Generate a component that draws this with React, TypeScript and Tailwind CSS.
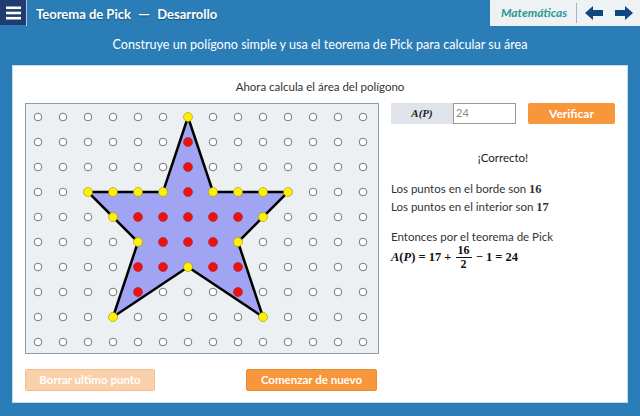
import React from "react";

const verts: [number, number][] = [
  [6, 0], [7, 3], [10, 3], [8, 5], [9, 8], [6, 6], [3, 8], [4, 5], [2, 3], [5, 3],
];
const border = new Set([
  "6,0","7,3","8,3","9,3","10,3","9,4","8,5","9,8","6,6","3,8","4,5","3,4","2,3","3,3","4,3","5,3",
]);
const interior = new Set([
  "6,1","6,2","6,3",
  "4,4","5,4","6,4","7,4","8,4",
  "5,5","6,5","7,5",
  "4,6","5,6","7,6","8,6",
  "4,7","8,7",
]);

const px = (i: number) => 12 + 25 * i;
const py = (j: number) => 13 + 25 * j;

function Grid() {
  const dots: React.ReactNode[] = [];
  for (let j = 0; j < 10; j++) {
    for (let i = 0; i < 14; i++) {
      const k = `${i},${j}`;
      if (border.has(k) || interior.has(k)) continue;
      dots.push(
        <circle key={k} cx={px(i)} cy={py(j)} r={3.8} fill="#ffffff" stroke="#777777" strokeWidth={1} />
      );
    }
  }
  const pts = verts.map(([i, j]) => `${px(i)},${py(j)}`).join(" ");
  return (
    <svg width={352} height={249} viewBox="0 0 352 249">
      {dots}
      <polygon points={pts} fill="#a1a4f3" stroke="#000000" strokeWidth={2.5} strokeLinejoin="miter" />
      {[...interior].map((k) => {
        const [i, j] = k.split(",").map(Number);
        return <circle key={"r" + k} cx={px(i)} cy={py(j)} r={4.5} fill="#ee1111" stroke="#aa2222" strokeWidth={0.6} />;
      })}
      {[...border].map((k) => {
        const [i, j] = k.split(",").map(Number);
        return <circle key={"y" + k} cx={px(i)} cy={py(j)} r={4.5} fill="#ffef00" stroke="#999900" strokeWidth={0.6} />;
      })}
    </svg>
  );
}

export default function App() {
  return (
    <div className="w-[640px] h-[416px] bg-[#2a7db7] flex flex-col font-['Lato',sans-serif] overflow-hidden">
      <div className="h-[26px] flex items-start">
        <div className="w-[26px] h-[25px] bg-[#1f3b70] flex items-center justify-center">
          <svg width="15" height="14" viewBox="0 0 15 14">
            <rect x="0" y="0.5" width="15" height="2.6" fill="#ffffff" />
            <rect x="0" y="5.7" width="15" height="2.6" fill="#ffffff" />
            <rect x="0" y="10.9" width="15" height="2.6" fill="#ffffff" />
          </svg>
        </div>
        <div className="w-px h-[26px] bg-[#a8c8e0]" />
        <div className="ml-[9px] text-[13px] font-bold text-white leading-[26px] [text-shadow:0_1px_1px_rgba(0,0,0,0.35)]">
          Teorema de Pick <span className="mx-[4px] text-[15px]">—</span> Desarrollo
        </div>
        <div className="flex-1" />
        <div className="w-[150px] h-[26px] bg-[#eef2f5] flex items-center">
          <span className="ml-[11px] text-[12px] italic font-bold text-[#2b9a8f]">Matemáticas</span>
          <div className="ml-[9px] w-px h-[20px] bg-[#9fb5c5]" />
          <svg className="ml-[8px]" width="18" height="14" viewBox="0 0 18 14">
            <polygon points="0,7 8,0 8,4 18,4 18,10 8,10 8,14" fill="#0f4880" />
          </svg>
          <svg className="ml-[12px]" width="18" height="14" viewBox="0 0 18 14">
            <polygon points="18,7 10,0 10,4 0,4 0,10 10,10 10,14" fill="#0f4880" />
          </svg>
        </div>
      </div>
      <div className="h-[39px] flex items-center justify-center text-white text-[12.6px]">
        Construye un polígono simple y usa el teorema de Pick para calcular su área
      </div>
      <div className="mx-[12px] h-[338px] bg-white border border-[#c9dbe8] flex flex-col px-[12px]">
        <div className="pt-[13px] h-[37px] text-center text-[11.5px] text-[#333333] leading-[15px]">
          Ahora calcula el área del polígono
        </div>
        <div className="flex gap-[12px]">
          <div className="w-[354px] h-[251px] border border-[#8a9cb0] bg-[#edf0f2]">
            <Grid />
          </div>
          <div className="w-[224px] flex flex-col text-[#333333] text-[11.5px]">
            <div className="flex h-[21px]">
              <div className="w-[62px] h-[21px] bg-[#dfe4ea] flex items-center justify-center font-['Liberation_Serif',serif] italic font-bold text-[11px] text-[#222]">
                A(P)
              </div>
              <div className="w-[63px] h-[21px] border border-[#9a9a9a] bg-white flex items-center pl-[2px] text-[11px] text-[#888888]">
                24
              </div>
              <div className="flex-1" />
              <div className="w-[87px] h-[21px] bg-[#f7963b] rounded-[2px] flex items-center justify-center text-white font-bold text-[12px]">
                Verificar
              </div>
            </div>
            <div className="mt-[26px] text-center leading-[16px] text-[#222]">¡Correcto!</div>
            <div className="mt-[14px] leading-[17px]">
              Los puntos en el borde son <b className="font-['Liberation_Serif',serif] text-[12.5px]">16</b>
            </div>
            <div className="leading-[17px]">
              Los puntos en el interior son <b className="font-['Liberation_Serif',serif] text-[12.5px]">17</b>
            </div>
            <div className="mt-[12px] leading-[17px]">Entonces por el teorema de Pick</div>
            <div className="flex items-center font-['Liberation_Serif',serif] font-bold text-[12.5px] text-[#111] -mt-[1px]">
              <span className="italic">A</span>
              <span>(</span>
              <span className="italic">P</span>
              <span>)&nbsp;=&nbsp;17&nbsp;+&nbsp;</span>
              <span className="inline-flex flex-col items-center text-[12px] leading-[13px] mx-[1px]">
                <span className="px-[2px]">16</span>
                <span className="w-full h-[1px] bg-[#111]" />
                <span>2</span>
              </span>
              <span>&nbsp;−&nbsp;1&nbsp;=&nbsp;24</span>
            </div>
          </div>
        </div>
        <div className="mt-[15px] w-[352px] flex justify-between">
          <div className="w-[130px] h-[22px] bg-[#f9d0a9] border border-[#f4bf90] rounded-[2px] flex items-center justify-center text-white font-bold text-[11.5px]">
            Borrar ultimo punto
          </div>
          <div className="w-[131px] h-[22px] bg-[#f7963b] border border-[#e88a30] rounded-[2px] flex items-center justify-center text-white font-bold text-[11.5px]">
            Comenzar de nuevo
          </div>
        </div>
      </div>
    </div>
  );
}
